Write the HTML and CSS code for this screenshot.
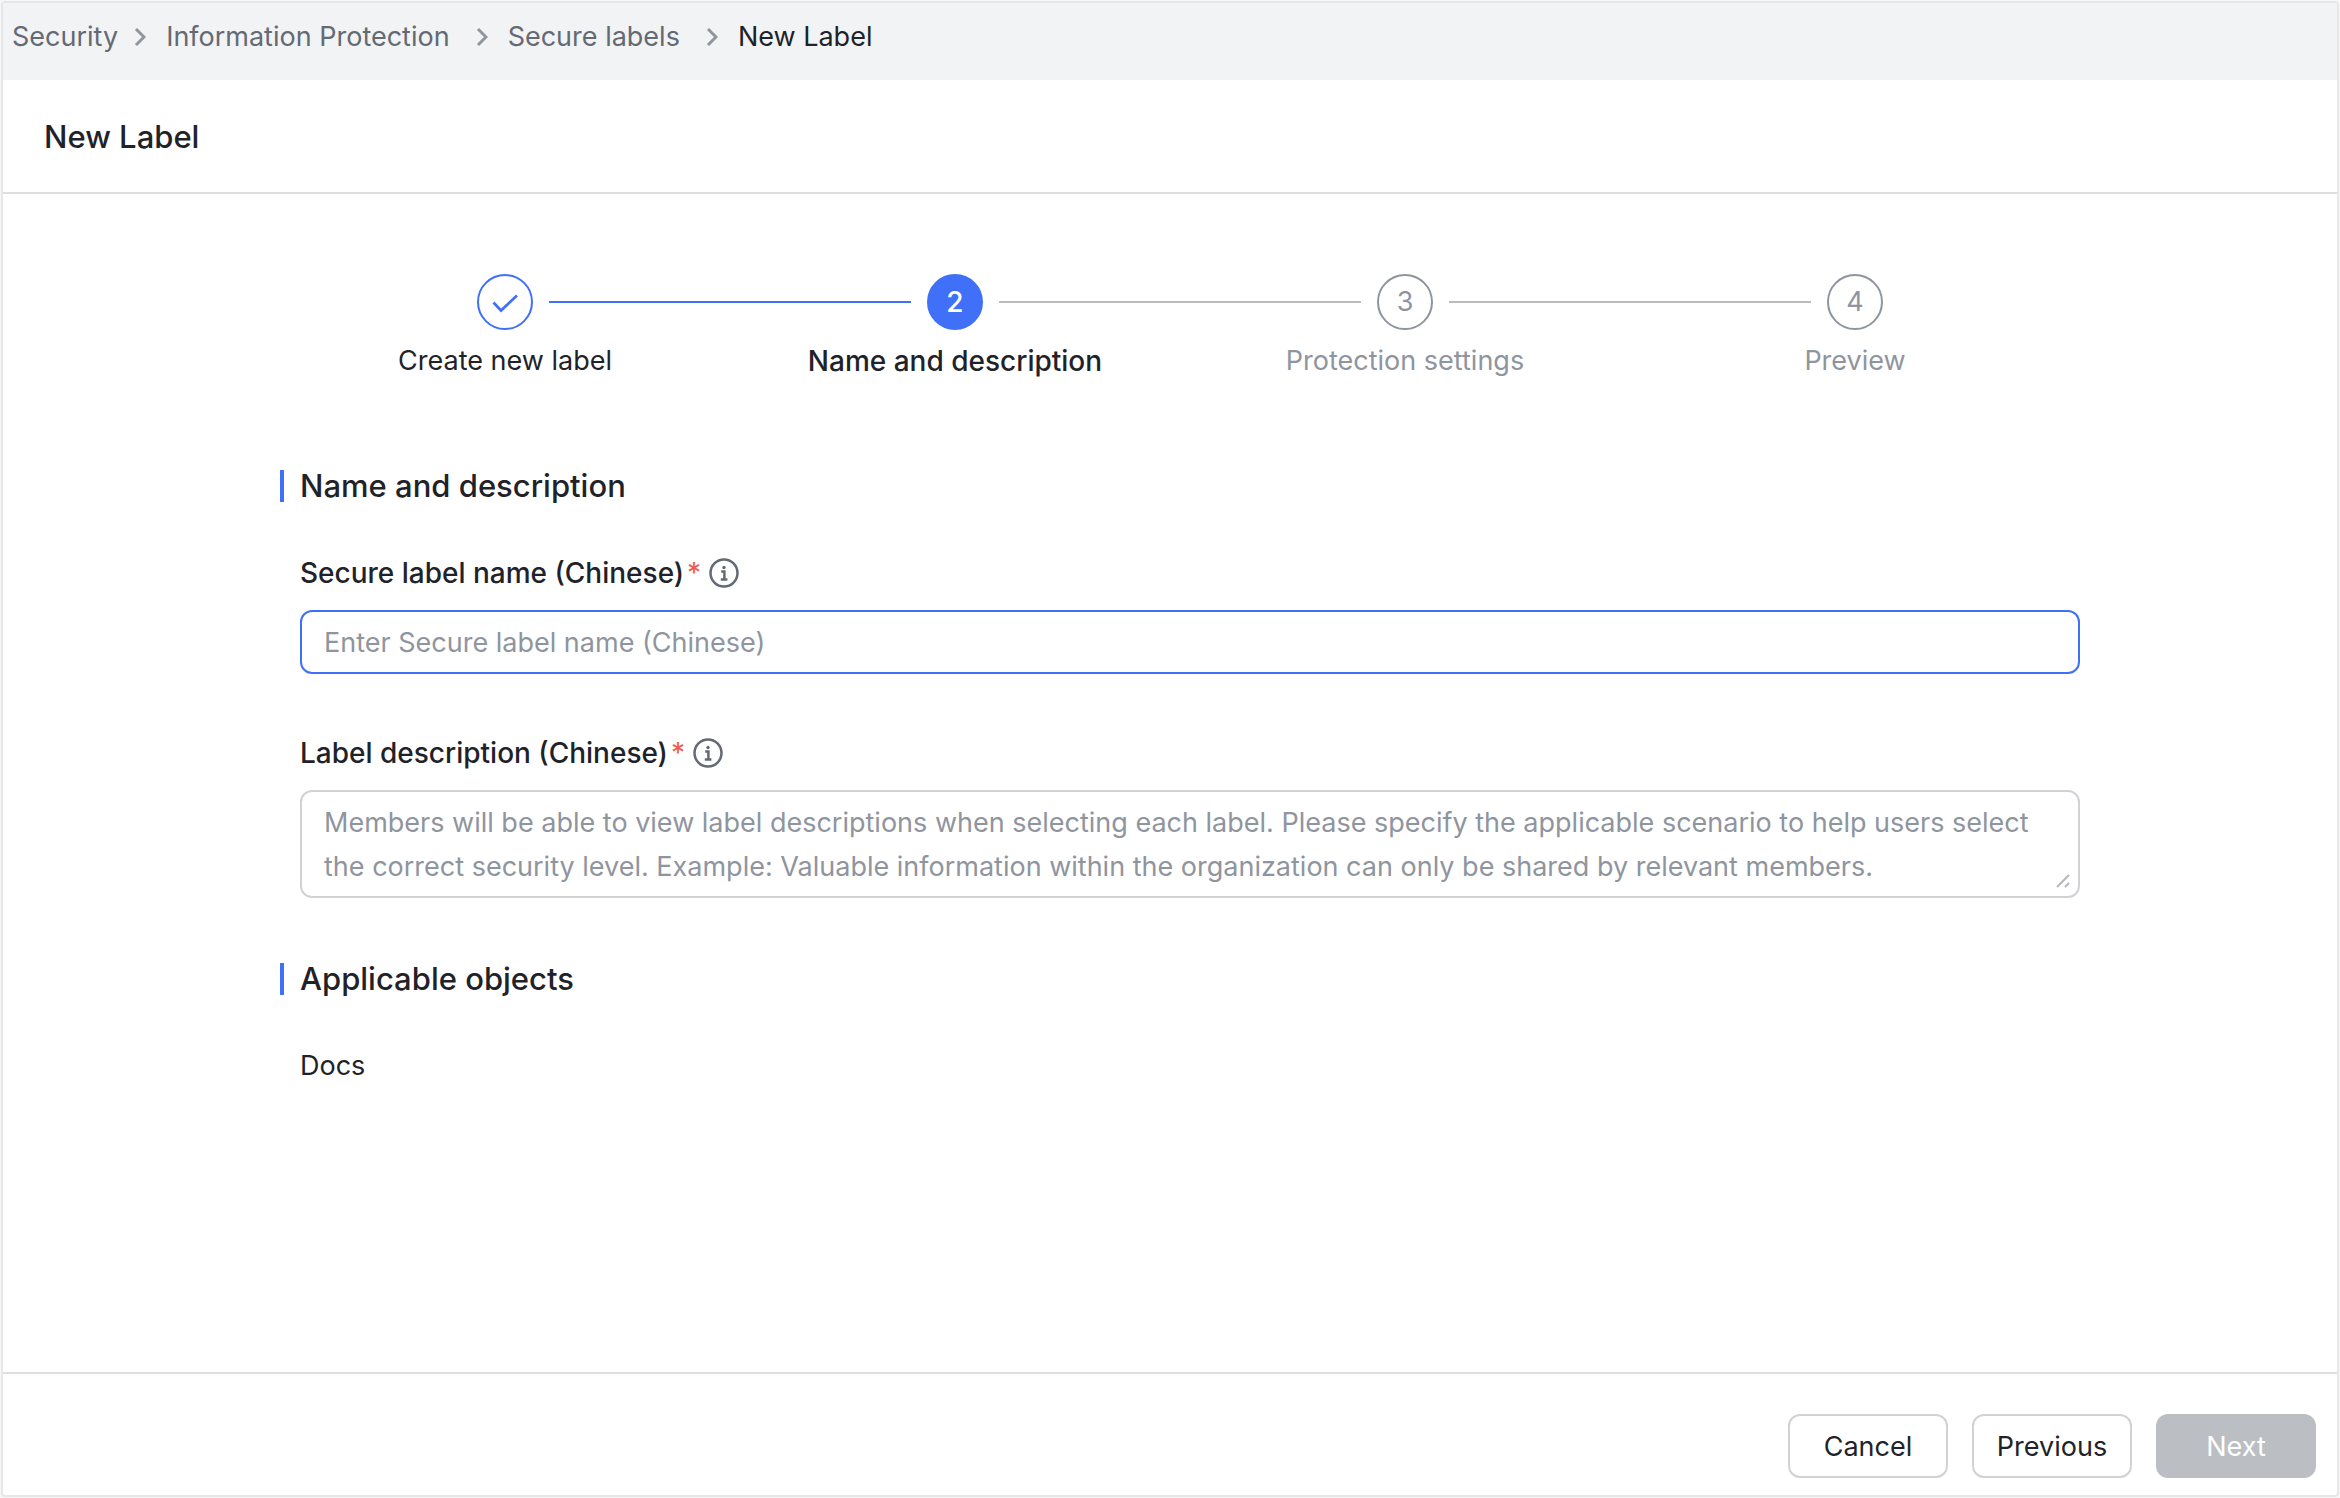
FILE: index.html
```html
<!DOCTYPE html>
<html lang="en">
<head>
<meta charset="utf-8">
<title>New Label</title>
<link rel="stylesheet" href="styles.css">
</head>
<body>
<div class="window">
  <nav class="crumbs" aria-label="Breadcrumb">
    <a href="#">Security</a>
    <svg class="chevron chevron-first" viewBox="0 0 12 20" aria-hidden="true"><path d="M2 2l8 8-8 8"/></svg>
    <a href="#">Information Protection</a>
    <svg class="chevron" viewBox="0 0 12 20" aria-hidden="true"><path d="M2 2l8 8-8 8"/></svg>
    <a href="#">Secure labels</a>
    <svg class="chevron" viewBox="0 0 12 20" aria-hidden="true"><path d="M2 2l8 8-8 8"/></svg>
    <span class="crumb-current" aria-current="page">New Label</span>
  </nav>

  <header class="page-header">
    <h1>New Label</h1>
  </header>

  <main class="content">
    <div class="column">
      <ol class="steps">
        <li class="step step-done">
          <span class="step-mark">
            <svg viewBox="0 0 28 28" aria-hidden="true"><path d="M2.500 14.500l7.500 8L26 7.500"/></svg>
          </span>
          <span class="step-label">Create new label</span>
        </li>
        <li class="step step-active" aria-current="step">
          <span class="step-mark">2</span>
          <span class="step-label">Name and description</span>
        </li>
        <li class="step">
          <span class="step-mark">3</span>
          <span class="step-label">Protection settings</span>
        </li>
        <li class="step">
          <span class="step-mark">4</span>
          <span class="step-label">Preview</span>
        </li>
      </ol>

      <form id="label-form" class="form">
        <section class="section">
          <h2>Name and description</h2>
          <div class="field">
            <div class="field-head">
              <label for="label-name">Secure label name (Chinese)</label>
              <span class="required">*</span>
              <svg class="info" viewBox="0 0 30 30" aria-hidden="true"><circle cx="15" cy="15" r="13.500"/><path d="M12.200 13.500h3.200v8M11.800 21.500h6.600"/><circle class="dot" cx="15" cy="9.500" r="1.700"/></svg>
            </div>
            <input id="label-name" class="control control-focus" type="text" placeholder="Enter Secure label name (Chinese)">
          </div>
          <div class="field">
            <div class="field-head">
              <label for="label-desc">Label description (Chinese)</label>
              <span class="required">*</span>
              <svg class="info" viewBox="0 0 30 30" aria-hidden="true"><circle cx="15" cy="15" r="13.500"/><path d="M12.200 13.500h3.200v8M11.800 21.500h6.600"/><circle class="dot" cx="15" cy="9.500" r="1.700"/></svg>
            </div>
            <div class="area">
              <textarea id="label-desc" class="control" rows="2" placeholder="Members will be able to view label descriptions when selecting each label. Please specify the applicable scenario to help users select the correct security level. Example: Valuable information within the organization can only be shared by relevant members."></textarea>
              <svg class="grip" viewBox="0 0 14 14" aria-hidden="true"><path d="M1 13L13 1M9 13l4-4"/></svg>
            </div>
          </div>
        </section>
        <section class="section">
          <h2>Applicable objects</h2>
          <p>Docs</p>
        </section>
      </form>
    </div>
  </main>

  <footer class="actions">
    <button type="button">Cancel</button>
    <button type="button">Previous</button>
    <button type="submit" form="label-form" disabled>Next</button>
  </footer>
</div>
</body>
</html>
```
FILE: styles.css
```css
* {
  box-sizing: border-box;
}

body {
  display: flex;
  min-height: 100vh;
  margin: 0;
  padding: 1px;
  background: #f7f7f7;
  color: #1f2329;
  font: 400 27px/44px Inter, "Liberation Sans", sans-serif;
}

h1,
h2,
p,
ol {
  margin: 0;
  padding: 0;
}

.window {
  display: flex;
  flex: 1;
  flex-direction: column;
  border: 2px solid #e6e7e8;
  border-radius: 4px;
  background: #fff;
}

.crumbs {
  display: flex;
  align-items: center;
  gap: 20px;
  padding: 12px 9px 21px;
  background: #f2f3f5;
}

.crumbs a {
  color: #646a73;
  text-decoration: none;
}

.chevron {
  width: 12px;
  height: 20px;
  margin-left: 6px;
  fill: none;
  stroke: #8f959e;
  stroke-width: 3;
}

.chevron-first {
  margin-left: -4px;
}

.page-header {
  padding: 35px 41px 33px;
  border-bottom: 2px solid #dedfe0;
}

h1,
h2 {
  font-size: 31px;
  font-weight: 500;
  line-height: 44px;
}

.content {
  flex: 1;
  padding: 80px 40px 40px 60px;
}

.column {
  max-width: 1800px;
  margin: 0 auto;
}

.steps {
  display: grid;
  grid-template-columns: repeat(4, 1fr);
  list-style: none;
}

.step {
  display: grid;
  grid-template-columns: 1fr 56px 1fr;
  align-items: center;
  column-gap: 16px;
  row-gap: 9px;
  color: #8f959e;
}

.step::before,
.step::after {
  content: "";
  height: 2px;
  background: #bbbbbd;
}

.step::before {
  order: 1;
}

.step-mark {
  order: 2;
}

.step::after {
  order: 3;
}

.step-label {
  order: 4;
  grid-column: 1 / -1;
  text-align: center;
}

.step:first-child::before,
.step:last-child::after {
  visibility: hidden;
}

.step-mark {
  display: flex;
  align-items: center;
  justify-content: center;
  height: 56px;
  border: 2px solid #8f959e;
  border-radius: 50%;
}

.step-mark svg {
  width: 28px;
  height: 28px;
  fill: none;
  stroke: #4070f8;
  stroke-width: 2.700;
}

.step-done .step-mark {
  border-color: #4070f8;
}

.step-done::after,
.step-active::before {
  background: #4070f8;
}

.step-done .step-label,
.step-active .step-label {
  color: #1f2329;
}

.step-active {
  font-size: 28px;
  font-weight: 500;
}

.step-active .step-mark {
  border-color: #4070f8;
  background: #4070f8;
  color: #fff;
}

.form {
  display: grid;
  gap: 59px;
  padding-top: 81px;
}

.section {
  padding-left: 20px;
}

h2 {
  display: flex;
  align-items: center;
  gap: 16px;
  margin: 0 0 43px -20px;
}

h2::before {
  content: "";
  width: 4px;
  height: 32px;
  background: #4070f8;
}

.field + .field {
  margin-top: 57px;
}

.field-head {
  display: flex;
  align-items: center;
  margin-bottom: 15px;
  font-size: 28px;
  font-weight: 500;
}

.required {
  margin: 0 8px 0 3px;
  color: #f05a50;
  font-weight: 400;
}

.info {
  width: 30px;
  height: 30px;
  fill: none;
  stroke: #646a73;
  stroke-width: 2.500;
}

.info .dot {
  fill: #646a73;
  stroke: none;
}

.control {
  display: block;
  width: 100%;
  padding: 8px 22px;
  border: 2px solid #d0d2d6;
  border-radius: 12px;
  outline: none;
  background: #fff;
  color: #1f2329;
  font: inherit;
}

input.control {
  height: 64px;
}

textarea.control {
  padding: 9px 22px 7px;
  resize: none;
}

.control::placeholder {
  color: #8f959e;
  opacity: 1;
}

.control-focus {
  border-color: #4070f8;
}

.area {
  position: relative;
}

.grip {
  position: absolute;
  right: 10px;
  bottom: 10px;
  width: 14px;
  height: 14px;
  fill: none;
  stroke: #b4b7bc;
  stroke-width: 2;
}

.actions {
  display: flex;
  justify-content: flex-end;
  gap: 24px;
  padding: 40px 21px 17px;
  border-top: 2px solid #dedfe0;
}

button {
  min-width: 160px;
  height: 64px;
  padding: 2px 20px 0;
  border: 2px solid #d0d2d6;
  border-radius: 12px;
  background: #fff;
  color: #1f2329;
  font: inherit;
}

button:disabled {
  border-color: #bbbfc4;
  background: #bbbfc4;
  color: #fff;
}
```
